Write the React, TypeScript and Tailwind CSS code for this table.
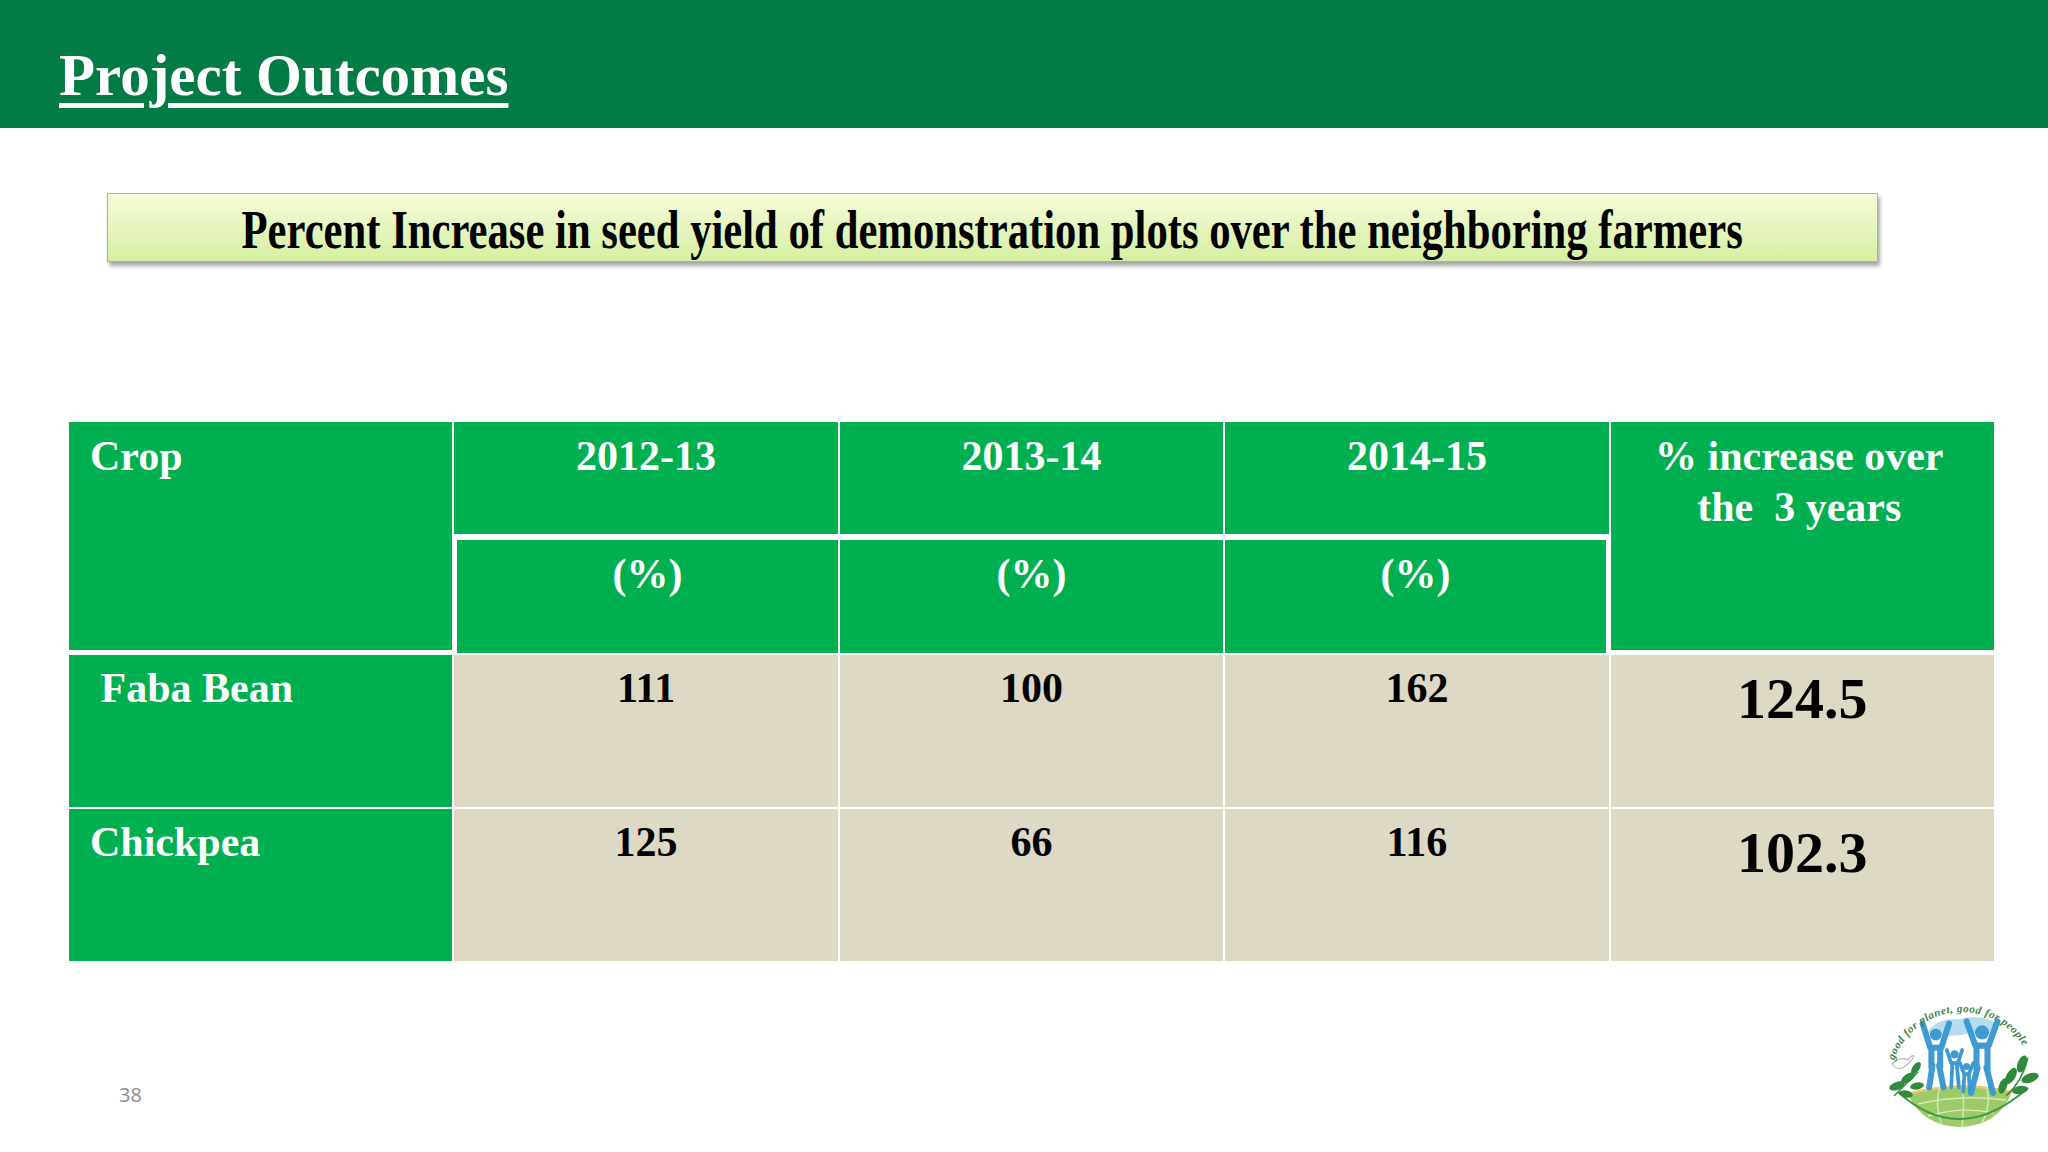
import React from "react";

const serif = "font-['Liberation_Serif','Times_New_Roman',serif]";

// Bottom-right project logo (drawn, approximate)
const Logo = () => (
  <svg width="178" height="160" viewBox="0 0 178 160" xmlns="http://www.w3.org/2000/svg">
    <defs>
      <path id="arcText" d="M 20 104 A 72 72 0 0 1 164 104" />
    </defs>
    {/* dove */}
    <path d="M22 84 Q30 76 38 80 Q42 74 44 76 Q40 84 32 88 Q26 90 22 84 Z" fill="none" stroke="#b8b8b8" strokeWidth="1.2" />
    {/* globe */}
    <path d="M38 114 Q90 100 142 112 Q128 146 90 147 Q52 146 38 114 Z" fill="#9dcb6a" />
    <path d="M38 114 Q90 100 142 112" fill="none" stroke="#f2c46a" strokeWidth="2.5" />
    <path d="M48 124 Q90 114 136 120 M58 136 Q92 126 124 133 M70 106 Q64 124 72 145 M92 104 Q95 124 92 147 M116 106 Q122 124 112 143"
      fill="none" stroke="#d6ebb4" strokeWidth="1.4" />
    {/* sky + figures */}
    <g transform="translate(90 114) scale(1.1) translate(-90 -114)">
      <path d="M60 58 Q70 44 90 46 Q110 40 126 52 Q118 62 100 58 Q82 64 60 58 Z" fill="#b6dcf0" />
      <g stroke="#3d9bd1" strokeWidth="5.5" strokeLinecap="round" strokeLinejoin="round" fill="none">
        <path d="M56 50 L63 72 L73 72 L80 50" />
        <path d="M64 72 L64 90 M72 72 L72 90" />
        <path d="M65 88 L62 108 M71 88 L75 108" />
        <path d="M96 48 L104 70 L116 70 L124 48" />
        <path d="M105 70 L105 92 M115 70 L115 92" />
        <path d="M106 90 L100 113 M114 90 L120 113" />
      </g>
      <g stroke="#3d9bd1" strokeWidth="3.4" strokeLinecap="round" strokeLinejoin="round" fill="none">
        <path d="M78 74 L82 86 L88 86 L92 74" />
        <path d="M83 86 L82 108 M87 86 L89 108" />
        <path d="M90 86 L94 96 L98 96 L102 86" />
        <path d="M94 96 L93 112 M98 96 L99 112" />
      </g>
      <circle cx="68" cy="60" r="5.4" fill="#3d9bd1" />
      <circle cx="110" cy="58" r="6.4" fill="#3d9bd1" />
      <circle cx="85" cy="78" r="3.8" fill="#3d9bd1" />
      <circle cx="96" cy="89" r="3.2" fill="#3d9bd1" />
    </g>
    <text
      fontFamily="'Liberation Serif', serif"
      fontStyle="italic"
      fontWeight="bold"
      fontSize="11"
      fill="#3f7f45"
    >
      <textPath href="#arcText" startOffset="24" textLength="162">
        good for planet, good for people
      </textPath>
    </text>
    {/* base arc */}
    <path d="M28 112 Q90 168 158 108" fill="none" stroke="#3f9a48" strokeWidth="2" />
    {/* left branch */}
    <path d="M24 116 Q36 104 48 92" fill="none" stroke="#2f8a3d" strokeWidth="1.5" />
    <g fill="#2f8a3d">
      <ellipse cx="27" cy="106" rx="8" ry="4" transform="rotate(-20 27 106)" />
      <ellipse cx="38" cy="98" rx="8" ry="4" transform="rotate(-35 38 98)" />
      <ellipse cx="36" cy="114" rx="7" ry="3.5" transform="rotate(10 36 114)" />
      <ellipse cx="47" cy="106" rx="7" ry="3.5" transform="rotate(-10 47 106)" />
      <ellipse cx="46" cy="88" rx="7" ry="3.5" transform="rotate(-55 46 88)" />
    </g>
    {/* right branch */}
    <path d="M136 116 Q152 102 158 78" fill="none" stroke="#2f8a3d" strokeWidth="1.5" />
    <g fill="#2f8a3d">
      <ellipse cx="141" cy="96" rx="9" ry="4.5" transform="rotate(-60 141 96)" />
      <ellipse cx="152" cy="84" rx="9" ry="4.5" transform="rotate(-70 152 84)" />
      <ellipse cx="160" cy="98" rx="9" ry="4.5" transform="rotate(-20 160 98)" />
      <ellipse cx="150" cy="110" rx="8" ry="4" transform="rotate(-10 150 110)" />
      <ellipse cx="133" cy="106" rx="8" ry="4" transform="rotate(-70 133 106)" />
    </g>
  </svg>
);

const years = ["2012-13", "2013-14", "2014-15"];

const rows = [
  { crop: " Faba Bean", values: ["111", "100", "162"], total: "124.5" },
  { crop: "Chickpea", values: ["125", "66", "116"], total: "102.3" },
];

const App: React.FC = () => {
  return (
    <div className={`w-[2048px] h-[1152px] bg-white overflow-hidden flex flex-col ${serif}`}>
      {/* Header */}
      <header className="h-[128px] bg-[#027b45] pl-[59px] pt-[42px]">
        <h1 className="text-[59px] leading-[1.15] font-bold text-white underline decoration-[5px] underline-offset-[8px]">
          Project Outcomes
        </h1>
      </header>

      {/* Banner */}
      <div className="mt-[65px] ml-[107px] w-[1771px] h-[69px] border border-[#a9bb84] bg-gradient-to-b from-[#f6fbd9] to-[#d6efa2] shadow-[2px_4px_4px_rgba(0,0,0,0.35)] flex items-center justify-center pt-[4px]">
        <span className="inline-block text-[54px] leading-none font-bold text-black whitespace-nowrap scale-x-[0.79]">
          Percent Increase in seed yield of demonstration plots over the neighboring farmers
        </span>
      </div>

      {/* Table */}
      <div className="mt-[160px] ml-[69px] w-[1925px] grid grid-cols-5 grid-rows-[112px_117px_152px_152px] gap-[2px] bg-white text-[42px] font-bold leading-[1.15]">
        <div className="row-span-2 bg-[#00af50] text-white pl-[21px] pt-[10px] border-b-[3px] border-white">
          Crop
        </div>
        {years.map((y) => (
          <div key={y} className="bg-[#00af50] text-white text-center pt-[10px]">
            {y}
          </div>
        ))}
        <div className="row-span-2 bg-[#00af50] text-white text-center pt-[9px] pr-[6px] leading-[51px] whitespace-pre border-b-[3px] border-white">
          {"% increase over\nthe  3 years"}
        </div>
        {years.map((y, i) => (
          <div
            key={y + "p"}
            className={`bg-[#00af50] text-white text-center pt-[10px] border-t-[4px] border-white ${
              i === 0 ? "border-l-[3px]" : ""
            } ${i === 2 ? "border-r-[3px]" : ""}`}
          >
            (%)
          </div>
        ))}
        {rows.map((r) => (
          <React.Fragment key={r.crop}>
            <div className="bg-[#00af50] text-white pl-[21px] pt-[9px] whitespace-pre">{r.crop}</div>
            {r.values.map((v, i) => (
              <div key={i} className="bg-[#ddd9c4] text-black text-center pt-[9px]">
                {v}
              </div>
            ))}
            <div className="bg-[#ddd9c4] text-black text-center pt-[11px] text-[58px]">{r.total}</div>
          </React.Fragment>
        ))}
      </div>

      {/* Footer */}
      <div className="mt-[19px] flex items-start justify-between">
        <div className="pl-[119px] pt-[100px] text-[20px] text-[#8c8c8c] font-['Open_Sans','Liberation_Sans',sans-serif]">
          38
        </div>
        <Logo />
      </div>
    </div>
  );
};

export default App;
